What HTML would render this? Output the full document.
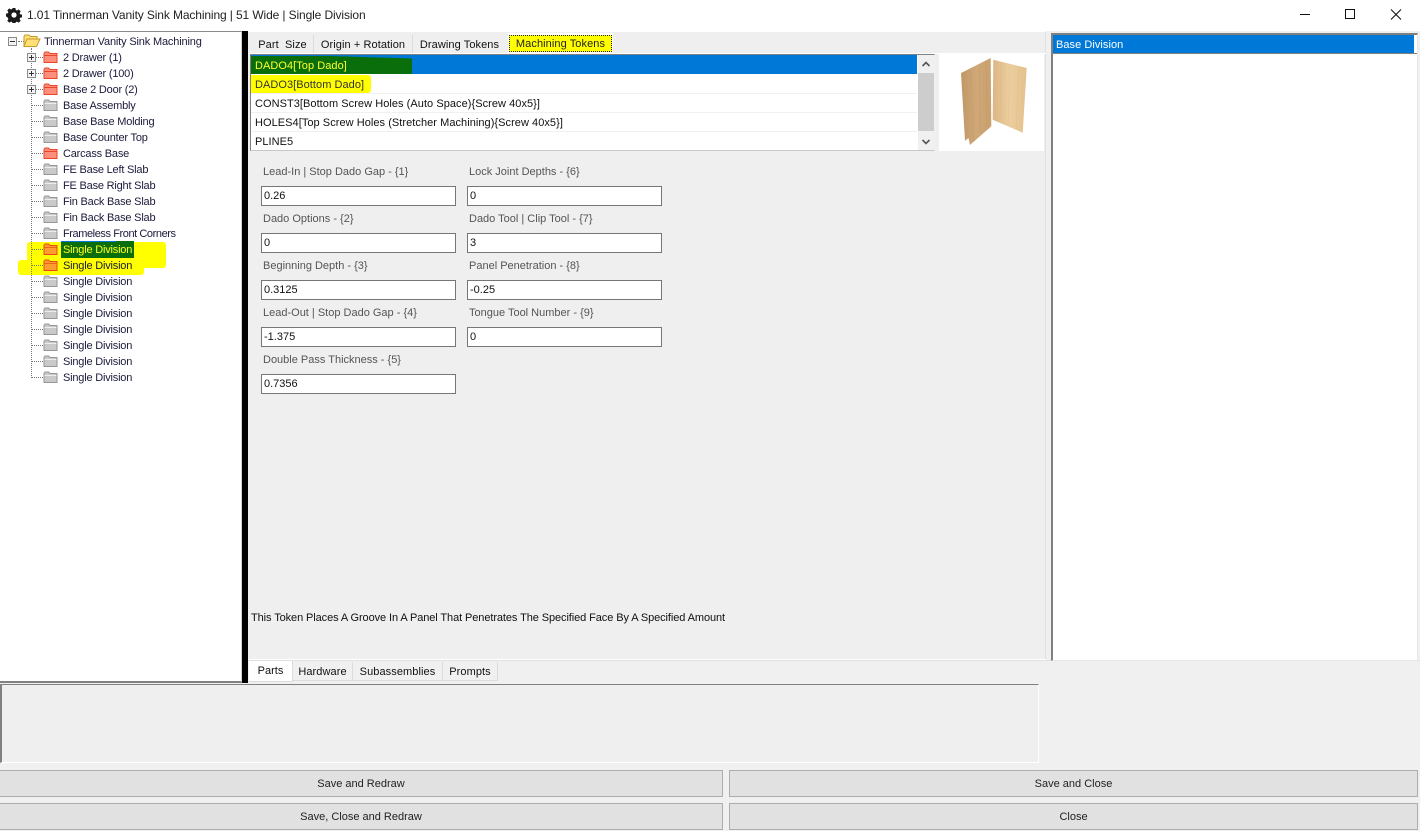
<!DOCTYPE html>
<html><head><meta charset="utf-8"><title>1.01 Tinnerman Vanity Sink Machining</title>
<style>
html,body{margin:0;padding:0}
body{width:1420px;height:828px;overflow:hidden;position:relative;background:#f0f0f0;font-family:"Liberation Sans",sans-serif;font-size:11px;color:#111}
div,span.a,svg.a{position:absolute;box-sizing:border-box}
.t{position:absolute;white-space:nowrap;line-height:18px;height:16px}
.n{color:#1a1a3a;left:63px;letter-spacing:-.2px}
.row{position:absolute;left:251px;height:18px;line-height:20px;white-space:nowrap;padding-left:4px;letter-spacing:.05px}
.sep{position:absolute;left:251px;width:666px;height:1px;background:#f0f0f0}
.lab{position:absolute;white-space:nowrap;line-height:18px;color:#555}
.inp{position:absolute;width:195px;height:20px;background:#fff;border:1px solid #767676;line-height:18px;padding-left:2px;color:#111}
.tab{position:absolute;text-align:center;white-space:nowrap;line-height:16px;border-right:1px solid #dcdcdc;letter-spacing:.08px}
.btn{position:absolute;background:#e1e1e1;border:1px solid #adadad;text-align:center;color:#222}
.f{position:absolute;left:43px;width:15px;height:12px}
.hl{position:absolute;background:#ffff00}
.dv{position:absolute;border-left:1px dotted #777}
.dh{position:absolute;border-top:1px dotted #777;height:1px}
.pm{position:absolute;left:27px;width:9px;height:9px;background:#f4f4f4;border:1px solid #8a8a8a}
.pm:before{content:"";position:absolute;left:1px;top:3px;width:5px;height:1px;background:#333}
.pm.p:after{content:"";position:absolute;left:3px;top:1px;width:1px;height:5px;background:#333}
</style></head><body>
<svg width="0" height="0" style="position:absolute"><defs>
<g id="red"><path d="M1 11.5V2.5L2 1H5.5L7 2.5H14V11.5Z" fill="#ff8f7a" stroke="#e8452a"/><rect x="1.5" y="4" width="12" height="1" fill="#e8452a"/></g>
<g id="gray"><path d="M1 11.5V2.5L2 1H5.5L7 2.5H14V11.5Z" fill="#c9c9c9" stroke="#969696"/><rect x="1.5" y="4" width="12" height="1" fill="#eee"/></g>
<g id="org"><path d="M1 11.5V2.5L2 1H5.5L7 2.5H14V11.5Z" fill="#ff9d2e" stroke="#ea4a12"/><rect x="1.5" y="4" width="12" height="1" fill="#e8661a"/></g>
<linearGradient id="w1" x1="0" y1="0" x2="1" y2="0"><stop offset="0" stop-color="#c09867"/><stop offset=".5" stop-color="#d0a877"/><stop offset="1" stop-color="#c9a06e"/></linearGradient>
<linearGradient id="w2" x1="0" y1="0" x2="1" y2="0"><stop offset="0" stop-color="#dcb685"/><stop offset=".5" stop-color="#ecce9e"/><stop offset="1" stop-color="#e4c18e"/></linearGradient>
</defs></svg>

<!-- title bar -->
<div style="left:0;top:0;width:1420px;height:31px;background:#fff"></div>
<svg class="a" style="left:6px;top:7px" width="16" height="16" viewBox="0 0 16 16"><path d="M6.6 1h2.8l.4 2 1.2.5 1.7-1.1 2 2-1.1 1.7.5 1.2 1.9.3v2.8l-1.9.4-.5 1.2 1.1 1.7-2 2-1.7-1.1-1.2.5-.4 1.9H6.6l-.4-1.9-1.2-.5-1.7 1.1-2-2 1.1-1.7-.5-1.2L0 9.4V6.6l1.9-.3.5-1.2-1.1-1.7 2-2L5 2.5l1.2-.5z" fill="#1a1a1a"/><circle cx="8" cy="8" r="2.6" fill="#fff"/></svg>
<div class="t" style="left:27px;top:7px;color:#222;font-size:12px;line-height:16px;letter-spacing:-.12px">1.01 Tinnerman Vanity Sink Machining | 51 Wide | Single Division</div>
<svg class="a" style="left:1300px;top:8px" width="110" height="14" viewBox="0 0 110 14"><path d="M0 6.5H10" stroke="#111" fill="none"/><rect x="45.5" y="1.5" width="9" height="9" fill="none" stroke="#111"/><path d="M91 1.5L101 11.5M101 1.5L91 11.5" stroke="#111" fill="none"/></svg>

<!-- tree panel -->
<div style="left:0;top:31px;width:242px;height:652px;background:#fff;border-top:1px solid #8a8a8a;border-bottom:2px solid #808080;border-right:1px solid #d0d0d0"></div>
<div style="left:242px;top:31px;width:6px;height:652px;background:#000"></div>

<!-- highlights tree -->
<div class="hl" style="left:27px;top:242px;width:139px;height:26px;border-radius:3px"></div>
<div class="hl" style="left:18px;top:260px;width:126px;height:15px;border-radius:3px"></div>
<div style="left:61px;top:241px;width:73px;height:17px;background:#0a6e0a"></div>
<div style="left:61px;top:241px;width:55px;height:1px;background:#0078d7"></div>

<!-- tree lines -->
<div class="dv" style="left:31px;top:48px;height:330px"></div>
<div class="dh" style="left:18px;top:41px;width:8px"></div>
<div class="dh" style="left:32px;top:57px;width:11px"></div>
<div class="dh" style="left:32px;top:73px;width:11px"></div>
<div class="dh" style="left:32px;top:89px;width:11px"></div>
<div class="dh" style="left:32px;top:105px;width:11px"></div>
<div class="dh" style="left:32px;top:121px;width:11px"></div>
<div class="dh" style="left:32px;top:137px;width:11px"></div>
<div class="dh" style="left:32px;top:153px;width:11px"></div>
<div class="dh" style="left:32px;top:169px;width:11px"></div>
<div class="dh" style="left:32px;top:185px;width:11px"></div>
<div class="dh" style="left:32px;top:201px;width:11px"></div>
<div class="dh" style="left:32px;top:217px;width:11px"></div>
<div class="dh" style="left:32px;top:233px;width:11px"></div>
<div class="dh" style="left:32px;top:249px;width:11px"></div>
<div class="dh" style="left:32px;top:265px;width:11px"></div>
<div class="dh" style="left:32px;top:281px;width:11px"></div>
<div class="dh" style="left:32px;top:297px;width:11px"></div>
<div class="dh" style="left:32px;top:313px;width:11px"></div>
<div class="dh" style="left:32px;top:329px;width:11px"></div>
<div class="dh" style="left:32px;top:345px;width:11px"></div>
<div class="dh" style="left:32px;top:361px;width:11px"></div>
<div class="dh" style="left:32px;top:377px;width:11px"></div>
<div class="pm" style="left:8px;top:37px"></div>
<div class="pm p" style="top:53px"></div>
<div class="pm p" style="top:69px"></div>
<div class="pm p" style="top:85px"></div>

<svg class="a" style="left:23px;top:34px" width="18" height="14" viewBox="0 0 18 14"><path d="M1 12.5V2.5L2 1H6L7.5 2.5H14V5H4L1 12.5H13.5L17 5H4L1 12.5Z" fill="#ffdf78" stroke="#c79a2a"/></svg>
<svg class="f" style="top:51px"><use href="#red"/></svg>
<svg class="f" style="top:67px"><use href="#red"/></svg>
<svg class="f" style="top:83px"><use href="#red"/></svg>
<svg class="f" style="top:99px"><use href="#gray"/></svg>
<svg class="f" style="top:115px"><use href="#gray"/></svg>
<svg class="f" style="top:131px"><use href="#gray"/></svg>
<svg class="f" style="top:147px"><use href="#red"/></svg>
<svg class="f" style="top:163px"><use href="#gray"/></svg>
<svg class="f" style="top:179px"><use href="#gray"/></svg>
<svg class="f" style="top:195px"><use href="#gray"/></svg>
<svg class="f" style="top:211px"><use href="#gray"/></svg>
<svg class="f" style="top:227px"><use href="#gray"/></svg>
<svg class="f" style="top:243px"><use href="#org"/></svg>
<svg class="f" style="top:259px"><use href="#org"/></svg>
<svg class="f" style="top:275px"><use href="#gray"/></svg>
<svg class="f" style="top:291px"><use href="#gray"/></svg>
<svg class="f" style="top:307px"><use href="#gray"/></svg>
<svg class="f" style="top:323px"><use href="#gray"/></svg>
<svg class="f" style="top:339px"><use href="#gray"/></svg>
<svg class="f" style="top:355px"><use href="#gray"/></svg>
<svg class="f" style="top:371px"><use href="#gray"/></svg>

<div class="t n" style="left:44px;top:33px;letter-spacing:-.16px">Tinnerman Vanity Sink Machining</div>
<div class="t n" style="top:49px">2 Drawer (1)</div>
<div class="t n" style="top:65px">2 Drawer (100)</div>
<div class="t n" style="top:81px">Base 2 Door (2)</div>
<div class="t n" style="top:97px">Base Assembly</div>
<div class="t n" style="top:113px">Base Base Molding</div>
<div class="t n" style="top:129px">Base Counter Top</div>
<div class="t n" style="top:145px">Carcass Base</div>
<div class="t n" style="top:161px">FE Base Left Slab</div>
<div class="t n" style="top:177px">FE Base Right Slab</div>
<div class="t n" style="top:193px">Fin Back Base Slab</div>
<div class="t n" style="top:209px">Fin Back Base Slab</div>
<div class="t n" style="top:225px;letter-spacing:-.42px">Frameless Front Corners</div>
<div class="t n" style="top:241px;color:#ffff20">Single Division</div>
<div class="t n" style="top:257px">Single Division</div>
<div class="t n" style="top:273px">Single Division</div>
<div class="t n" style="top:289px">Single Division</div>
<div class="t n" style="top:305px">Single Division</div>
<div class="t n" style="top:321px">Single Division</div>
<div class="t n" style="top:337px">Single Division</div>
<div class="t n" style="top:353px">Single Division</div>
<div class="t n" style="top:369px">Single Division</div>

<!-- middle panel -->
<div style="left:248px;top:31px;width:798px;height:629px;background:#efefef;border-right:1px solid #e0e0e0;border-top:1px solid #fff"></div>
<div style="left:248px;top:53px;width:798px;height:1px;background:#fff"></div>
<div class="tab" style="left:252px;top:35px;width:62px;height:18px;line-height:20px">Part &nbsp;Size</div>
<div class="tab" style="left:314px;top:35px;width:99px;height:18px;line-height:20px">Origin + Rotation</div>
<div class="tab" style="left:412px;top:35px;width:95px;height:18px;line-height:20px;border-right:0">Drawing Tokens</div>
<div style="left:508px;top:33px;width:105px;height:20px;background:#fff"></div>
<div style="left:509px;top:35px;width:103px;height:17px;background:#ffff00;border:1px dotted #222;text-align:center;line-height:17px;white-space:nowrap;color:#222;letter-spacing:.08px">Machining Tokens</div>

<!-- list -->
<div style="left:250px;top:54px;width:685px;height:97px;background:#fff;border-left:1px solid #808080;border-top:1px solid #808080;border-right:1px solid #f0f0f0;border-bottom:1px solid #c8c8c8"></div>
<div style="left:251px;top:55px;width:666px;height:19px;background:#0078d7"></div>
<div class="hl" style="left:251px;top:75px;width:120px;height:18px;border-radius:0 3px 3px 0"></div>
<div style="left:251px;top:56px;width:161px;height:18px;background:#0a6e0a;clip-path:polygon(0 0,50% 0,100% 14%,100% 100%,0 100%)"></div>
<div class="sep" style="top:93px"></div><div class="sep" style="top:112px"></div><div class="sep" style="top:131px"></div>
<div class="row" style="top:56px;color:#ffff30">DADO4[Top Dado]</div>
<div class="row" style="top:75px;color:#333">DADO3[Bottom Dado]</div>
<div class="row" style="top:94px">CONST3[Bottom Screw Holes (Auto Space){Screw 40x5}]</div>
<div class="row" style="top:113px">HOLES4[Top Screw Holes (Stretcher Machining){Screw 40x5}]</div>
<div class="row" style="top:132px">PLINE5</div>
<!-- scrollbar -->
<div style="left:918px;top:55px;width:16px;height:95px;background:#f0f0f0"></div>
<div style="left:918px;top:73px;width:16px;height:58px;background:#cdcdcd"></div>
<svg class="a" style="left:918px;top:55px" width="16" height="95" viewBox="0 0 16 95"><path d="M4.5 11L8 7.5L11.5 11M4.5 85L8 88.5L11.5 85" fill="none" stroke="#555" stroke-width="1.6"/></svg>

<!-- preview image -->
<div style="left:939px;top:54px;width:105px;height:97px;background:#fff"></div>
<svg class="a" style="left:939px;top:54px" width="106" height="98" viewBox="939 54 106 98"><polygon points="961,73 990.7,58 991.3,126.3 970,145 968.5,138 965,140.7" fill="url(#w1)"/><path d="M970 71L974 141M979 65L981 134M986 61L987 129" stroke="#a98456" stroke-width=".5" opacity=".3" fill="none"/><polygon points="993.3,59.7 1026.7,68 1022.7,132.7 992.7,119.7" fill="url(#w2)"/><path d="M1001 62L1000 123M1010 64L1008 126M1019 66L1016 130" stroke="#cfa877" stroke-width=".5" opacity=".3" fill="none"/></svg>

<!-- fields -->
<div class="lab" style="left:263px;top:163px">Lead-In | Stop Dado Gap - {1}</div>
<div class="lab" style="left:469px;top:163px">Lock Joint Depths - {6}</div>
<div class="inp" style="left:261px;top:186px">0.26</div>
<div class="inp" style="left:467px;top:186px">0</div>
<div class="lab" style="left:263px;top:210px">Dado Options - {2}</div>
<div class="lab" style="left:469px;top:210px">Dado Tool | Clip Tool - {7}</div>
<div class="inp" style="left:261px;top:233px">0</div>
<div class="inp" style="left:467px;top:233px">3</div>
<div class="lab" style="left:263px;top:257px">Beginning Depth - {3}</div>
<div class="lab" style="left:469px;top:257px">Panel Penetration - {8}</div>
<div class="inp" style="left:261px;top:280px">0.3125</div>
<div class="inp" style="left:467px;top:280px">-0.25</div>
<div class="lab" style="left:263px;top:304px">Lead-Out | Stop Dado Gap - {4}</div>
<div class="lab" style="left:469px;top:304px">Tongue Tool Number - {9}</div>
<div class="inp" style="left:261px;top:327px">-1.375</div>
<div class="inp" style="left:467px;top:327px">0</div>
<div class="lab" style="left:263px;top:351px">Double Pass Thickness - {5}</div>
<div class="inp" style="left:261px;top:374px">0.7356</div>

<div class="t" style="left:251px;top:609px;color:#111;letter-spacing:-.09px">This Token Places A Groove In A Panel That Penetrates The Specified Face By A Specified Amount</div>

<!-- bottom tabs -->
<div style="left:248px;top:659px;width:798px;height:1px;background:#fff"></div>
<div style="left:248px;top:660px;width:1172px;height:1px;background:#e0e0e0"></div>
<div style="left:249px;top:661px;width:44px;height:21px;background:#fff;text-align:center;line-height:20px;color:#111;border-right:1px solid #dcdcdc;border-bottom:1px solid #dcdcdc">Parts</div>
<div class="tab" style="left:293px;top:662px;width:60px;height:19px;line-height:20px;border-bottom:1px solid #dcdcdc">Hardware</div>
<div class="tab" style="left:353px;top:662px;width:90px;height:19px;line-height:20px;border-bottom:1px solid #dcdcdc">Subassemblies</div>
<div class="tab" style="left:443px;top:662px;width:55px;height:19px;line-height:20px;border-bottom:1px solid #dcdcdc">Prompts</div>

<!-- right list -->
<div style="left:1051px;top:33px;width:367px;height:628px;background:#fff;border-left:2px solid #808080;border-top:2px solid #808080;border-right:1px solid #e8e8e8;border-bottom:1px solid #e8e8e8"></div>
<div style="left:1053px;top:35px;width:361px;height:18px;background:#0078d7;color:#fff;line-height:20px;padding-left:3px;white-space:nowrap;letter-spacing:.05px">Base Division</div>
<div style="left:1053px;top:53px;width:364px;height:1px;background:#808080"></div>

<!-- bottom area -->
<div style="left:0;top:684px;width:1039px;height:79px;background:#efefef;border-top:1px solid #808080;border-left:2px solid #808080;border-right:1px solid #fff;border-bottom:1px solid #fff"></div>

<!-- buttons -->
<div class="btn" style="left:-1px;top:770px;width:724px;height:27px;line-height:27px">Save and Redraw</div>
<div class="btn" style="left:729px;top:770px;width:689px;height:27px;line-height:27px">Save and Close</div>
<div class="btn" style="left:-1px;top:803px;width:724px;height:27px;line-height:27px">Save, Close and Redraw</div>
<div class="btn" style="left:729px;top:803px;width:689px;height:27px;line-height:27px">Close</div>
</body></html>
